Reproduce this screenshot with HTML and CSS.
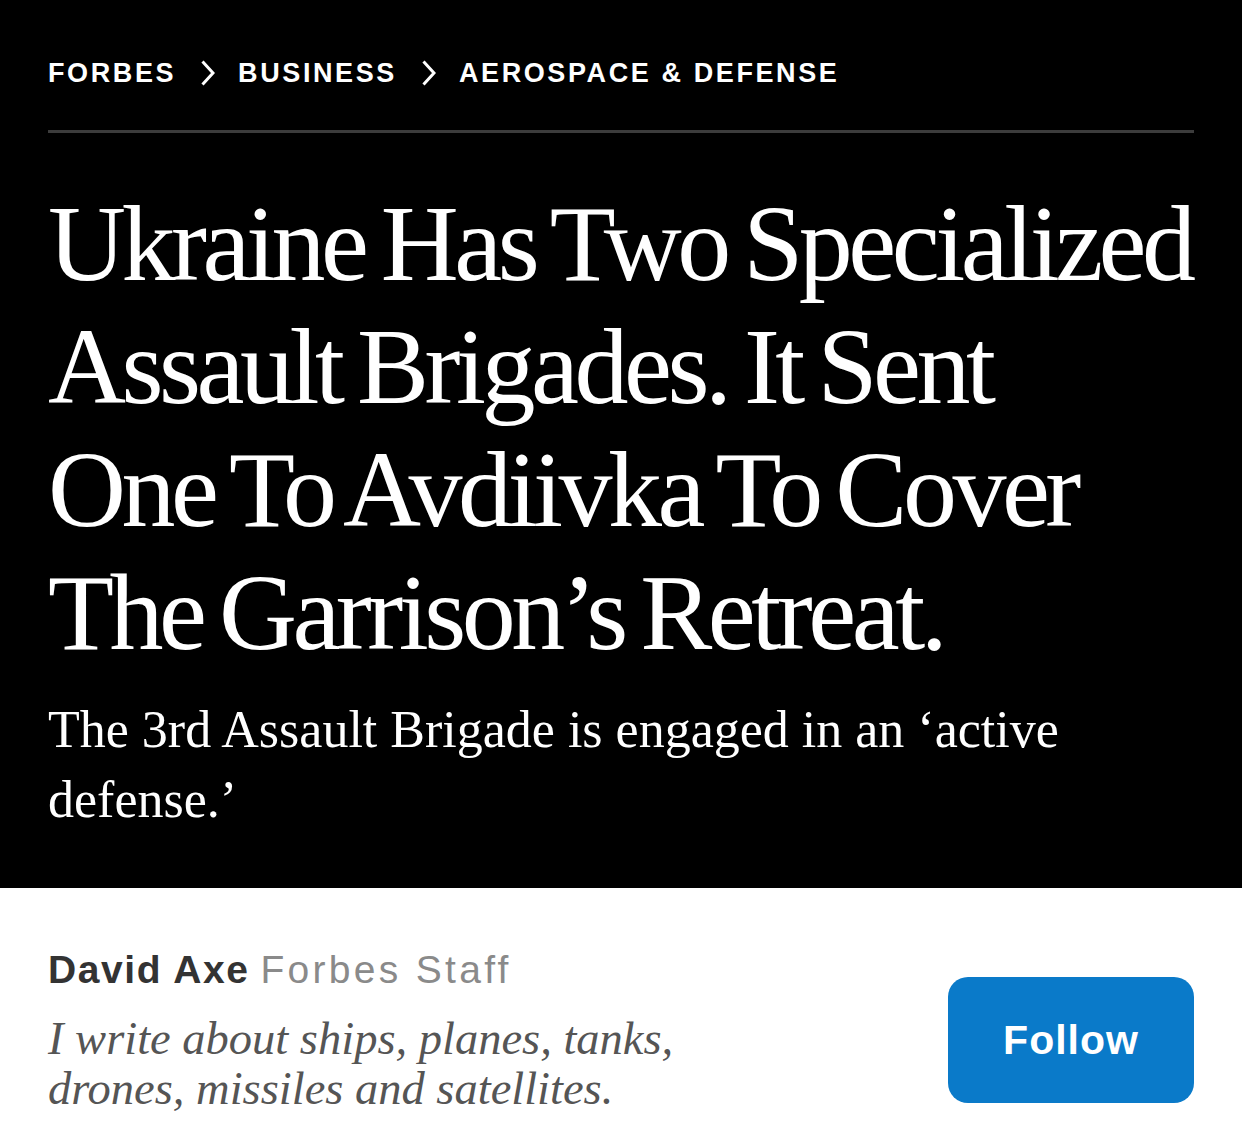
FILE: index.html
```html
<!DOCTYPE html>
<html lang="en">
<head>
<meta charset="utf-8">
<title>Forbes</title>
<link rel="stylesheet" href="styles.css">
</head>
<body>
<header class="hero">
  <nav class="crumbs">
    <span class="crumb">Forbes</span>
    <svg class="chev" viewBox="0 0 14 26" width="14" height="26"><path d="M1.5 1.5 L12 13 L1.5 24.5" fill="none" stroke="#fff" stroke-width="3"/></svg>
    <span class="crumb">Business</span>
    <svg class="chev" viewBox="0 0 14 26" width="14" height="26"><path d="M1.5 1.5 L12 13 L1.5 24.5" fill="none" stroke="#fff" stroke-width="3"/></svg>
    <span class="crumb">Aerospace &amp; Defense</span>
  </nav>
  <hr class="rule">
  <h1 class="title">Ukraine Has Two Specialized<br>Assault Brigades. It Sent<br>One To Avdiivka To Cover<br>The Garrison’s Retreat.</h1>
  <p class="dek">The 3rd Assault Brigade is engaged in an ‘active defense.’</p>
</header>
<section class="byline">
  <div class="author">
    <div class="name"><strong>David Axe</strong> <span class="role">Forbes Staff</span></div>
    <p class="bio">I write about ships, planes, tanks, drones, missiles and satellites.</p>
  </div>
  <button class="follow">Follow</button>
</section>
</body>
</html>
```

FILE: styles.css
```css
html, body { margin: 0; padding: 0; }
body { background: #fff; width: 1242px; }
.hero {
  background: #000;
  color: #fff;
  padding: 52px 48px 0 48px;
  height: 888px;
  box-sizing: border-box;
}
.crumbs {
  display: flex;
  align-items: center;
  gap: 23px;
  height: 42px;
}
.crumb {
  font-family: "Liberation Sans", Arial, sans-serif;
  font-weight: 700;
  font-size: 27px;
  letter-spacing: 2.6px;
  text-transform: uppercase;
  color: #fff;
}
.chev { display: block; margin-left: 2px; }
.rule {
  border: 0;
  height: 3px;
  background: #3c3c3c;
  margin: 36px 0 0 0;
}
.title {
  font-family: "Liberation Serif", "Times New Roman", serif;
  font-weight: 400;
  font-size: 108px;
  line-height: 123px;
  letter-spacing: -4.5px;
  word-spacing: -6px;
  white-space: nowrap;
  margin: 49px 0 0 0;
  color: #fff;
}
.dek {
  font-family: "Liberation Serif", Georgia, serif;
  font-size: 52px;
  line-height: 70px;
  margin: 21px 0 0 0;
  color: #fff;
  width: 1060px;
}
.byline {
  display: flex;
  justify-content: space-between;
  align-items: flex-start;
  padding: 60px 48px 0 48px;
}
.name {
  font-family: "Liberation Sans", Arial, sans-serif;
  font-size: 39px;
  line-height: 44px;
  color: #333;
}
.name strong { font-weight: 700; color: #333; letter-spacing: 1.6px; }
.role { color: #8a8a8a; font-weight: 400; letter-spacing: 3.3px; }
.bio {
  font-family: "Liberation Serif", Georgia, serif;
  font-style: italic;
  font-size: 46.5px;
  line-height: 50px;
  color: #555;
  margin: 22px 0 0 0;
  width: 700px;
}
.follow {
  margin-top: 29px;
  width: 246px;
  height: 126px;
  background: #0a7ac9;
  color: #fff;
  border: 0;
  border-radius: 20px;
  font-family: "Liberation Sans", Arial, sans-serif;
  font-weight: 700;
  font-size: 41px;
  letter-spacing: 1px;
  padding: 0;
}
```
